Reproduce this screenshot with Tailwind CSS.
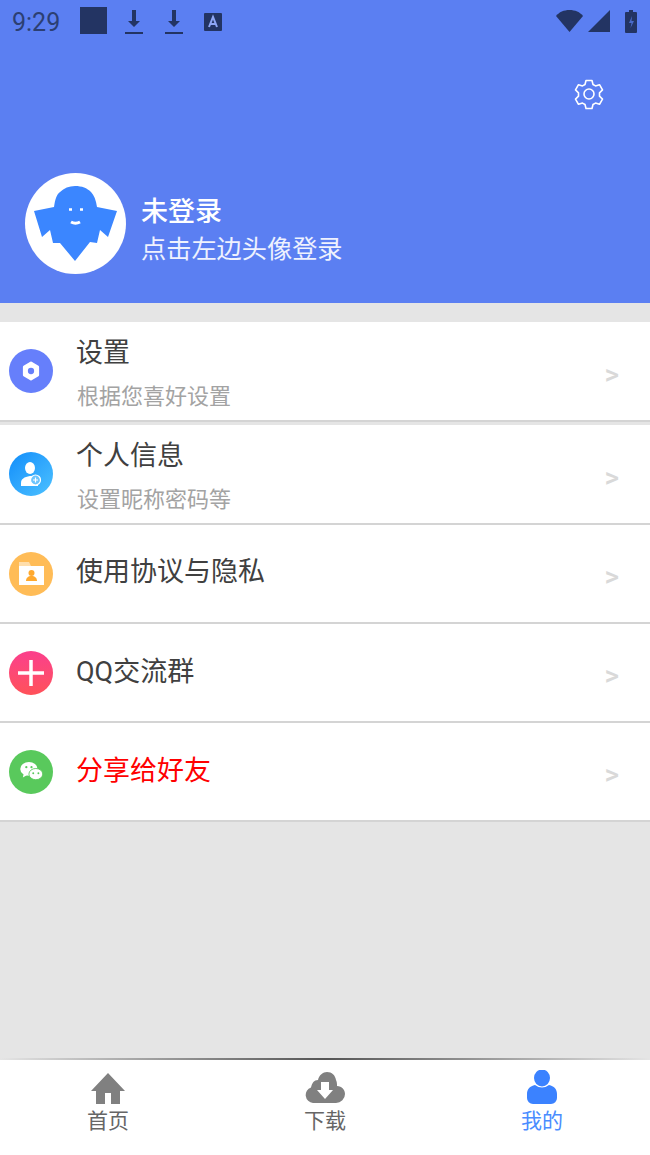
<!doctype html>
<html lang="zh">
<head>
  <title>我的</title>
  <meta charset="UTF-8">
  <script src="https://cdn.jsdelivr.net/npm/@tailwindcss/browser@4"></script>
</head>
<body>
  <div class="w-[650px] h-[1155px] flex flex-col bg-[#e5e5e5] overflow-hidden font-['Roboto','Noto_Sans_CJK_SC',sans-serif]">

    <!-- header -->
    <div class="h-[303px] shrink-0 bg-[#5b7ff2] flex flex-col">
      <div class="h-[44px] flex items-center pl-[12px] pr-[13px] text-[#233463]">
        <span class="text-[25px] leading-none w-[68px] text-[#2c3f73]">9:29</span>
        <div class="w-[27px] h-[27px] bg-[#233463] mr-[17px] mt-[-3px]"></div>
        <svg class="w-[20px] h-[28px] mr-[20px]" viewBox="0 0 20 28" fill="currentColor"><path d="M8 2h4v11h4l-6 6-6-6h4z"/><rect x="1" y="24" width="18" height="2"/></svg>
        <svg class="w-[20px] h-[28px] mr-[20px]" viewBox="0 0 20 28" fill="currentColor"><path d="M8 2h4v11h4l-6 6-6-6h4z"/><rect x="1" y="24" width="18" height="2"/></svg>
        <svg class="w-[18px] h-[18px]" viewBox="0 0 18 18"><rect width="18" height="18" rx="1" fill="currentColor"/><path d="M5 14 9 4l4 10M6.500 11h5" fill="none" stroke="#8ea6f5" stroke-width="2"/></svg>
        <div class="ml-auto flex items-center">
          <svg class="w-[27px] h-[22px] mr-[5px] mt-[-3px]" viewBox="0 0 27 22" fill="currentColor"><path d="M0 6C3 2 8 0 13.500 0S24 2 27 6L13.500 22z"/></svg>
          <svg class="w-[22px] h-[22px] mr-[15px] mt-[-2px]" viewBox="0 0 22 22" fill="currentColor"><path d="M22 0v22H0z"/></svg>
          <svg class="w-[12px] h-[23px] mt-[-2px]" viewBox="0 0 12 23"><path d="M4 0h4v2h3a1 1 0 0 1 1 1v19a1 1 0 0 1-1 1H1a1 1 0 0 1-1-1V3a1 1 0 0 1 1-1h3z" fill="currentColor"/><path d="M7 6 4 13h2.500l-1 5L9 11H6.500z" fill="#4a6bc9"/></svg>
        </div>
      </div>
      <div class="flex justify-end pr-[45px] pt-[34px] h-[129px]">
        <svg class="w-[32px] h-[32px]" viewBox="0 0 32 32" fill="none" stroke="#fff" stroke-width="1.600" stroke-linejoin="round"><path d="M13 2.500h6l1 4 2.500 1.400 4-1.200 3 5.200-3 2.900v3.400l3 2.900-3 5.200-4-1.200-2.500 1.400-1 4h-6l-1-4-2.500-1.400-4 1.200-3-5.200 3-2.900v-3.400l-3-2.900 3-5.200 4 1.200L12 6.500z"/><circle cx="16" cy="16" r="5"/></svg>
      </div>
      <div class="flex items-center pl-[25px]">
        <div class="w-[101px] h-[101px] rounded-full bg-white flex items-center justify-center">
          <svg class="w-[101px] h-[101px]" viewBox="0 0 101 101">
            <path d="M9 38 29 34C30 26 32 21 35 19 39 15 44 13 50 13 57 13 62 15 66 19 69 22 71 27 72 34L92 38 83 64 75 57 72 70 65 69 50 88 35 70 28 70 25 57 17 64z" fill="#3b86ff"/>
            <path d="M44 36.500h3M55 36.500h3" stroke="#fff" stroke-width="2.500"/>
            <path d="M46 49q4.500 2.500 9 0" stroke="#fff" stroke-width="3" fill="none"/>
          </svg>
        </div>
        <div class="ml-[15px] mt-[14px] flex flex-col text-white">
          <span class="text-[27px] leading-[38px] font-medium">未登录</span>
          <span class="text-[25.200px] leading-[38px] text-white/90">点击左边头像登录</span>
        </div>
      </div>
    </div>

    <!-- list -->
    <div class="mt-[19px] flex flex-col">
      <div class="h-[100px] bg-white border-b-2 border-[#d4d4d4] flex items-center pl-[9px] pr-[31px]">
        <div class="w-[44px] h-[44px] rounded-full bg-[#667ffb] flex items-center justify-center">
          <svg class="w-[18px] h-[20px]" viewBox="0 0 20 22"><path d="M10 2l7.500 4.500v9L10 20l-7.500-4.500v-9z" fill="#fff" stroke="#fff" stroke-width="3" stroke-linejoin="round"/><circle cx="10" cy="11" r="3.500" fill="#667ffb"/></svg>
        </div>
        <div class="ml-[23px] flex flex-col">
          <span class="text-[27px] leading-[40px] mt-[3px] text-[#404040]">设置</span>
          <span class="text-[22px] leading-[32px] mt-[8px] ml-px text-[#a3a3a3]">根据您喜好设置</span>
        </div>
        <span class="ml-auto mt-[8px] text-[28px] font-medium text-[#d9d9d9]">&gt;</span>
      </div>
      <div class="mt-[3px] h-[100px] bg-white border-b-2 border-[#d4d4d4] flex items-center pl-[9px] pr-[31px]">
        <div class="w-[44px] h-[44px] rounded-full bg-linear-to-br from-[#0d8dfa] to-[#4cc1ff] flex items-center justify-center">
          <svg class="w-[20px] h-[24px]" viewBox="0 0 20 24"><ellipse cx="9" cy="6" rx="5" ry="6" fill="#fff"/><path d="M0 24v-3c0-4 3-6 9-7 4 0 7 2 8 5v5z" fill="#fff"/><circle cx="14.500" cy="18" r="5" fill="#6cc4fd" stroke="#fff" stroke-width="1.200"/><path d="M12 18h5M14.500 15.500v5" stroke="#fff" stroke-width="1.200"/></svg>
        </div>
        <div class="ml-[23px] flex flex-col">
          <span class="text-[27px] leading-[40px] mt-[3px] text-[#404040]">个人信息</span>
          <span class="text-[22px] leading-[32px] mt-[8px] ml-px text-[#a3a3a3]">设置昵称密码等</span>
        </div>
        <span class="ml-auto mt-[8px] text-[28px] font-medium text-[#d9d9d9]">&gt;</span>
      </div>
      <div class="h-[99px] bg-white border-b-2 border-[#d4d4d4] flex items-center pl-[9px] pr-[31px]">
        <div class="w-[44px] h-[44px] rounded-full bg-[#ffbc57] flex items-center justify-center">
          <svg class="w-[25px] h-[23px]" viewBox="0 0 25 23"><path d="M0 0h10l2 4H0z" fill="#fff" fill-opacity=".5"/><path d="M0 4h25v19H0z" fill="#fff"/><circle cx="12.500" cy="11" r="3" fill="#ffa92e"/><path d="M7 19c0-3 2-5 5.500-5s5.500 2 5.500 5z" fill="#ffa92e"/></svg>
        </div>
        <span class="ml-[23px] mb-[4px] text-[27px] leading-[40px] text-[#404040]">使用协议与隐私</span>
        <span class="ml-auto mt-[6px] text-[28px] font-medium text-[#d9d9d9]">&gt;</span>
      </div>
      <div class="h-[99px] bg-white border-b-2 border-[#d4d4d4] flex items-center pl-[9px] pr-[31px]">
        <div class="w-[44px] h-[44px] rounded-full bg-linear-to-b from-[#fb3f8c] to-[#ff5158] flex items-center justify-center">
          <svg class="w-[26px] h-[26px]" viewBox="0 0 26 26"><path d="M0 13h26M13 0v26" stroke="#fff" stroke-width="3.500"/></svg>
        </div>
        <span class="ml-[23px] mb-[2px] text-[27px] leading-[40px] text-[#404040]">QQ交流群</span>
        <span class="ml-auto mt-[6px] text-[28px] font-medium text-[#d9d9d9]">&gt;</span>
      </div>
      <div class="h-[99px] bg-white border-b-2 border-[#d4d4d4] flex items-center pl-[9px] pr-[31px]">
        <div class="w-[44px] h-[44px] rounded-full bg-[#59c95c] flex items-center justify-center">
          <svg class="w-[23px] h-[19px]" viewBox="0 0 26 22"><ellipse cx="10" cy="8" rx="10" ry="8" fill="#fff"/><path d="M4 13l-1 5 5-3z" fill="#fff"/><ellipse cx="18" cy="14" rx="8" ry="6.500" fill="#fff" stroke="#59c95c"/><circle cx="7" cy="6" r="1.300" fill="#59c95c"/><circle cx="13" cy="6" r="1.300" fill="#59c95c"/><circle cx="15" cy="13" r="1.100" fill="#59c95c"/><circle cx="21" cy="13" r="1.100" fill="#59c95c"/></svg>
        </div>
        <span class="ml-[23px] mb-[2px] text-[27px] leading-[40px] text-[#ff0000]">分享给好友</span>
        <span class="ml-auto mt-[6px] text-[28px] font-medium text-[#d9d9d9]">&gt;</span>
      </div>
    </div>

    <!-- tab bar -->
    <div class="mt-auto h-[95px] shrink-0 bg-white relative flex pt-[10px]">
      <div class="absolute top-[-2px] left-0 right-0 h-[2px] bg-linear-to-r from-[#e5e5e5] via-[#555555] to-[#e5e5e5]"></div>
      <div class="w-[216px] flex flex-col items-center text-[#666666]">
        <svg class="w-[34px] h-[34px]" viewBox="0 0 34 34" fill="#808080"><path d="M17 3 34 21h-5v13H20V23h-6v11H5V21H0z"/></svg>
        <span class="text-[21px] leading-[30px] mt-[2px]">首页</span>
      </div>
      <div class="w-[218px] flex flex-col items-center text-[#666666]">
        <svg class="w-[40px] h-[34px]" viewBox="0 0 40 34"><path d="M8 33a8 8 0 0 1-2-15.500C7 13 9 10 13 10c1-5 5-8 9-8 5 0 8 3 9 8 1 2 1 4 1 6 5 0 8 4 8 8a9 9 0 0 1-9 9z" fill="#808080"/><path d="M16 12h8v8h4l-8 9-8-9h4z" fill="#fff"/></svg>
        <span class="text-[21px] leading-[30px] mt-[2px]">下载</span>
      </div>
      <div class="w-[216px] flex flex-col items-center text-[#4a8cff]">
        <svg class="w-[30px] h-[34px]" viewBox="0 0 30 34" fill="#3b82ff"><ellipse cx="15" cy="8" rx="8" ry="8.500"/><path d="M8 15q7 5 14 0c5 1 8 4 8 9v4a6 6 0 0 1-6 6H6a6 6 0 0 1-6-6v-4c0-5 3-8 8-9z"/></svg>
        <span class="text-[21px] leading-[30px] mt-[2px]">我的</span>
      </div>
    </div>
  </div>
</body>
</html>
